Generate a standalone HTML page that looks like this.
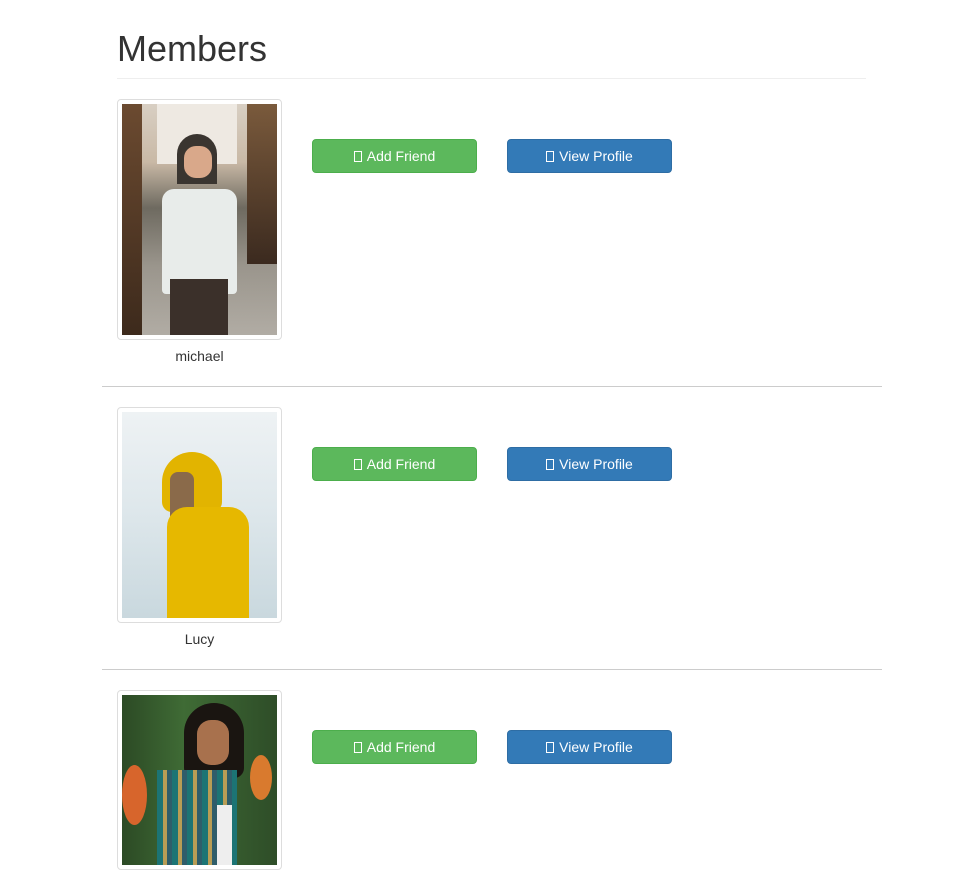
<!DOCTYPE html>
<html><head><meta charset="utf-8"><style>
*{box-sizing:border-box}
body{margin:0;background:#fff;font-family:"Liberation Sans",Arial,sans-serif;color:#333;font-size:14px;width:979px;height:855px;overflow:hidden;position:relative}
h1{position:absolute;left:117px;top:26px;margin:0;font-weight:400;font-size:36px;line-height:46px;color:#333}
.hr1{position:absolute;left:117px;top:78px;width:749px;border-top:1px solid #eee}
.hr{position:absolute;left:102px;width:780px;border-top:1px solid #ccc}
.thumb{position:absolute;left:117px;width:165px;border:1px solid #ddd;border-radius:4px;padding:4px;background:#fff}
.img{width:155px;position:relative;overflow:hidden}
.name{position:absolute;left:117px;width:165px;text-align:center;font-size:14px}
.btn{position:absolute;width:165px;height:34px;border-radius:4px;color:#fff;font-size:14px;text-align:center;line-height:32px}
.g{left:312px;background:#5cb85c;border:1px solid #4cae4c}
.b{left:507px;background:#337ab7;border:1px solid #2e6da4}
.ic{display:inline-block;width:8px;height:11px;border:1px solid #fff;vertical-align:-1px;margin-right:5px}
.a{position:absolute}
</style></head><body>
<h1>Members</h1>
<div class="hr1"></div>

<div class="thumb" style="top:99px;height:241px"><div class="img" style="height:231px;background:linear-gradient(#d8cfc3 0,#c9b9a6 25%,#6e6a60 45%,#9a958c 70%,#b1aca4 100%)">
<div class="a" style="left:35px;top:0;width:80px;height:60px;background:#eee9e2"></div>
<div class="a" style="left:55px;top:30px;width:40px;height:50px;background:#3a3530;border-radius:20px 20px 0 0"></div>
<div class="a" style="left:0;top:0;width:20px;height:231px;background:linear-gradient(#6b4a30,#3d2a1c)"></div>
<div class="a" style="left:125px;top:0;width:30px;height:160px;background:linear-gradient(#7a5a3c,#3b2a1f)"></div>
<div class="a" style="left:62px;top:42px;width:28px;height:32px;background:#d9a88a;border-radius:12px"></div>
<div class="a" style="left:40px;top:85px;width:75px;height:105px;background:#e8ecea;border-radius:12px 12px 4px 4px"></div>
<div class="a" style="left:48px;top:175px;width:58px;height:56px;background:#3b302a"></div>
</div></div>
<div class="name" style="top:348px">michael</div>
<div class="btn g" style="top:139px"><span class="ic"></span>Add Friend</div>
<div class="btn b" style="top:139px"><span class="ic"></span>View Profile</div>
<div class="hr" style="top:386px"></div>

<div class="thumb" style="top:407px;height:216px"><div class="img" style="height:206px;background:linear-gradient(#eef2f4 0,#dfe8ec 45%,#c9d8de 100%)">
<div class="a" style="left:40px;top:40px;width:60px;height:60px;background:#e2b400;border-radius:30px 30px 10px 10px"></div>
<div class="a" style="left:48px;top:60px;width:24px;height:70px;background:#8a6a4a;border-radius:8px"></div>
<div class="a" style="left:45px;top:95px;width:82px;height:111px;background:#e6b800;border-radius:20px 20px 0 0"></div>
</div></div>
<div class="name" style="top:631px">Lucy</div>
<div class="btn g" style="top:447px"><span class="ic"></span>Add Friend</div>
<div class="btn b" style="top:447px"><span class="ic"></span>View Profile</div>
<div class="hr" style="top:669px"></div>

<div class="thumb" style="top:690px;height:180px"><div class="img" style="height:170px;background:linear-gradient(90deg,#2c4a25,#3f6b35 40%,#2e4d28)">
<div class="a" style="left:0;top:70px;width:25px;height:60px;background:#d7652c;border-radius:50%"></div>
<div class="a" style="left:128px;top:60px;width:22px;height:45px;background:#d97a2e;border-radius:50%"></div>
<div class="a" style="left:62px;top:8px;width:60px;height:75px;background:#1a1511;border-radius:30px 30px 10px 10px"></div>
<div class="a" style="left:75px;top:25px;width:32px;height:45px;background:#a8714d;border-radius:14px"></div>
<div class="a" style="left:35px;top:75px;width:80px;height:95px;background:repeating-linear-gradient(90deg,#1c7474 0 6px,#b89d55 6px 10px,#2f5d6a 10px 15px)"></div>
<div class="a" style="left:95px;top:110px;width:15px;height:60px;background:#eee"></div>
</div></div>
<div class="btn g" style="top:730px"><span class="ic"></span>Add Friend</div>
<div class="btn b" style="top:730px"><span class="ic"></span>View Profile</div>
</body></html>
